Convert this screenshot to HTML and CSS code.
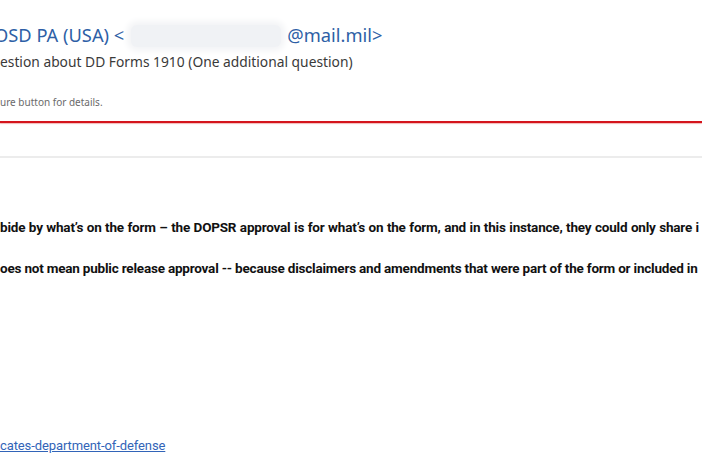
FILE: index.html
```html
<!DOCTYPE html>
<html lang="en">
<head>
    <meta charset="UTF-8">
    <title>Question about DD Forms 1910</title>
    <link rel="stylesheet" href="styles.css">
</head>
<body>
    <div class="reading-pane">
        <div class="header">
            <div class="sender">OSD PA (USA) &lt;<span class="redacted"></span>@mail.mil&gt;</div>
            <div class="subject">estion about DD Forms 1910 (One additional question)</div>
            <div class="notice">ure button for details.</div>
        </div>
        <div class="red-rule"></div>
        <div class="toolbar"></div>
        <div class="message">
            <p class="wide">bide by what’s on the form – the DOPSR approval is for what’s on the form, and in this instance, they could only share i</p>
            <p>oes not mean public release approval -- because disclaimers and amendments that were part of the form or included in</p>
        </div>
        <div class="signature">
            <a href="#">cates-department-of-defense</a>
        </div>
    </div>
</body>
</html>
```

FILE: styles.css
```css
body { margin: 0; background: #fff; font-family: "Noto Sans", "Open Sans", sans-serif; }
.reading-pane { width: 702px; height: 459px; overflow: hidden; }
.header { padding-top: 22px; }
.sender { font-size: 18.3px; color: #2e5fa6; white-space: nowrap; text-indent: -6px; line-height: 26px; }
.redacted { display: inline-block; width: 150px; height: 22px; margin: 0 6px -5px 7px; background: #f0f2f5; border-radius: 6px; box-shadow: 0 0 6px 4px #f3f4f6; }
.subject { font-size: 13.8px; color: #3a3a3a; white-space: nowrap; line-height: 22px; margin-top: 3px; }
.notice { font-size: 10px; color: #6a6a6a; margin-top: 22px; line-height: 14px; }
.red-rule { height: 2px; background: #d4141c; margin-top: 12px; box-shadow: 0 1px 1px #f3b8b8; }
.toolbar { height: 33px; border-bottom: 2px solid #ececec; }
.message { padding-top: 60px; font-family: Roboto, "DejaVu Sans", sans-serif; font-weight: bold; font-size: 13.5px; letter-spacing: -0.2px; color: #111; }
.message p { margin: 0 0 23px; white-space: nowrap; line-height: 18px; }
.message .wide { word-spacing: 0.4px; }
.signature { margin-top: 161px; font-family: Roboto, "DejaVu Sans", sans-serif; font-size: 13px; letter-spacing: -0.1px; }
.signature a { color: #3264b8; }
```
